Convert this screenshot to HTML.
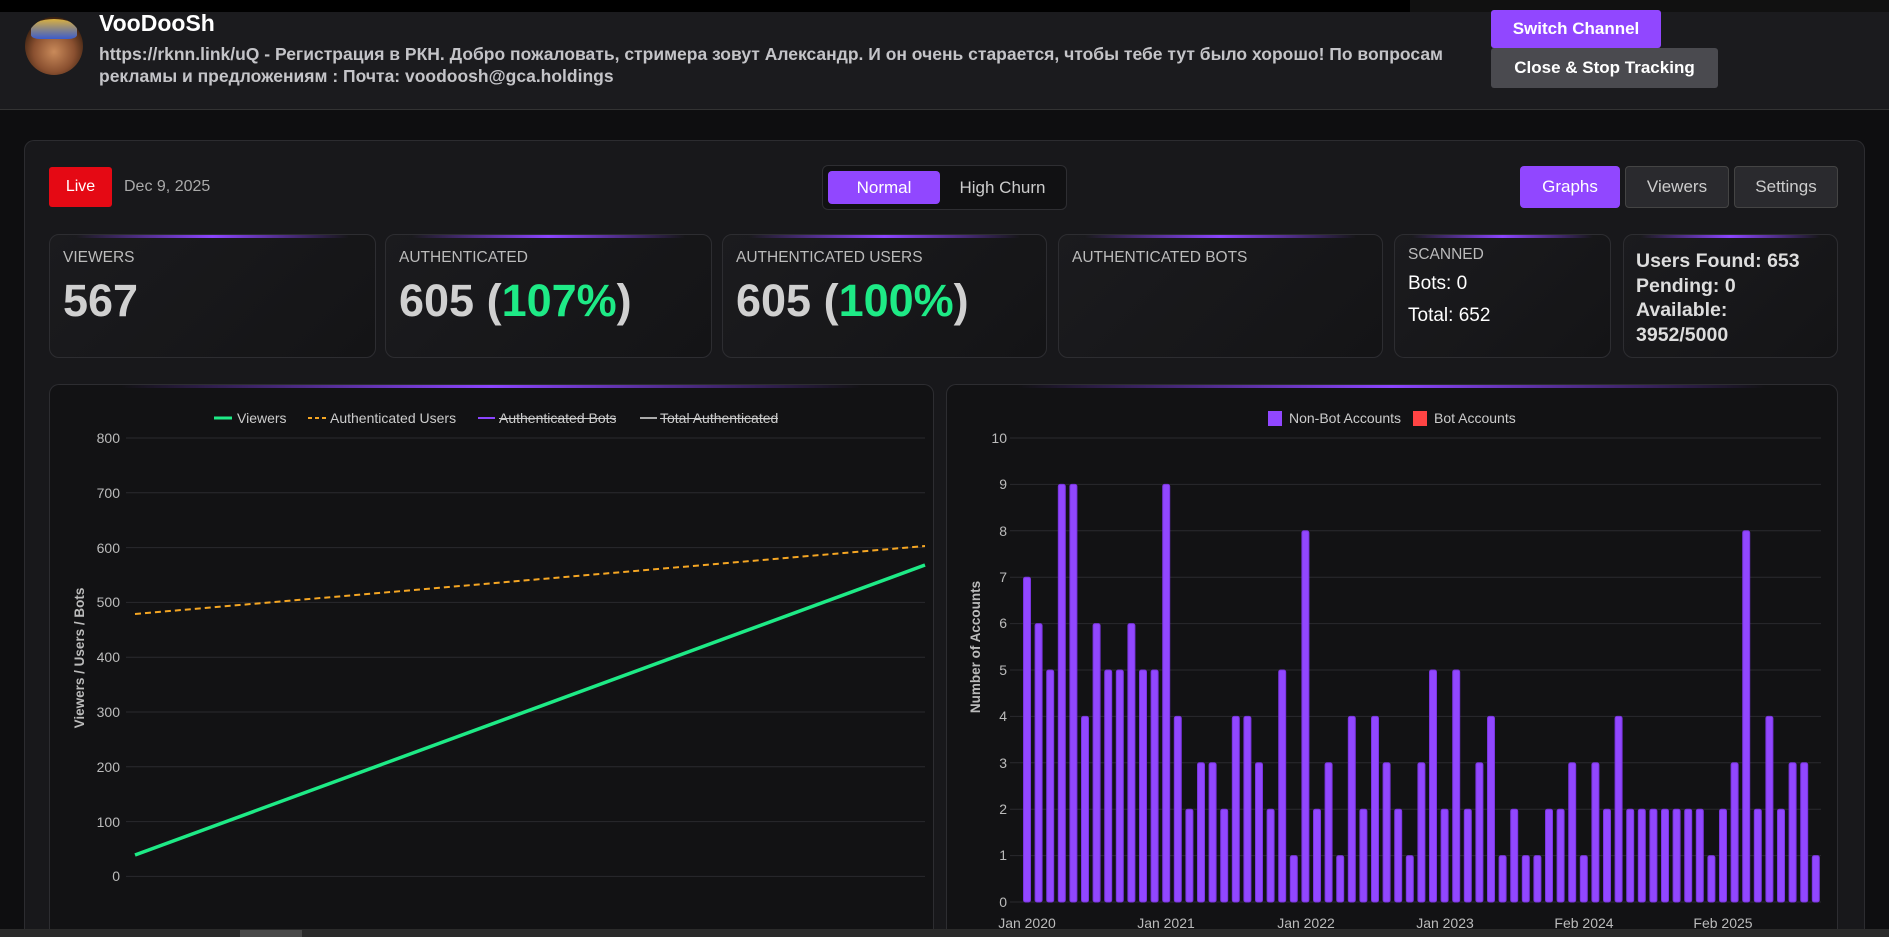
<!DOCTYPE html>
<html><head><meta charset="utf-8"><style>
*{box-sizing:border-box;margin:0;padding:0}
html,body{width:1889px;height:937px;overflow:hidden}
body{background:#0e0e10;font-family:"Liberation Sans",Arial,sans-serif;position:relative;color:#ddd}
.abs{position:absolute}
.topbar{left:0;top:0;width:1889px;height:12px;background:#000}
.header{left:0;top:12px;width:1889px;height:98px;background:#1b1b1e;border-bottom:1px solid #333}
.avatar{left:25px;top:17px;width:58px;height:58px;border-radius:50%;background:radial-gradient(circle at 50% 60%,#c98a5a 0,#8a5030 45%,#3a2010 75%);overflow:hidden}
.avatar:before{content:"";position:absolute;left:6px;top:2px;width:46px;height:20px;border-radius:50% 50% 20% 20%;background:linear-gradient(#d9b040,#3b5ccc)}
.title{left:99px;top:10px;font-size:23px;font-weight:bold;color:#fff}
.desc{left:99px;top:43px;width:1360px;font-size:17.5px;font-weight:bold;color:#c4c4c8;line-height:22px}
.btn{font-weight:bold;color:#fff;font-size:17px;display:flex;align-items:center;justify-content:center;border-radius:3px}
.main{left:24px;top:140px;width:1841px;height:797px;background:#18181b;border:1px solid #2c2c30;border-bottom:none;border-radius:10px 10px 0 0}
.card{background:linear-gradient(135deg,#1b1b1e,#141416);border:1px solid #2d2d31;border-radius:10px;overflow:hidden}
.card:before{content:"";position:absolute;left:8%;right:8%;top:0;height:3px;background:linear-gradient(90deg,transparent,#8b45ff,transparent)}
.lbl{position:absolute;left:13px;top:14px;font-size:15.5px;color:#bbb}
.big{position:absolute;left:13px;top:40px;font-size:45px;font-weight:bold;color:#d0d0d0}
.g{color:#1eea86}
.tab{font-size:17px;color:#ccc;display:flex;align-items:center;justify-content:center;border-radius:4px}
svg text{font-family:"Liberation Sans",Arial,sans-serif}
</style></head><body>
<div class="abs topbar"></div>
<div class="abs" style="left:1410px;top:0;width:479px;height:12px;background:#111"></div>
<div class="abs header"></div>
<div class="abs avatar"></div>
<div class="abs title">VooDooSh</div>
<div class="abs desc">https://rknn.link/uQ - Регистрация в РКН. Добро пожаловать, стримера зовут Александр. И он очень старается, чтобы тебе тут было хорошо! По вопросам рекламы и предложениям : Почта: voodoosh@gca.holdings</div>
<div class="abs btn" style="left:1491px;top:10px;width:170px;height:38px;background:#9147ff">Switch Channel</div>
<div class="abs btn" style="left:1491px;top:48px;width:227px;height:40px;background:#4a4a4f">Close &amp; Stop Tracking</div>

<div class="abs main"></div>
<div class="abs btn" style="left:49px;top:167px;width:63px;height:40px;background:#e50914;font-weight:normal;font-size:16px;border-radius:3px">Live</div>
<div class="abs" style="left:124px;top:178px;font-size:16px;color:#aaa">Dec 9, 2025</div>
<div class="abs" style="left:822px;top:165px;width:245px;height:45px;border:1px solid #2e2e32;border-radius:6px;background:#111113"></div>
<div class="abs tab" style="left:828px;top:171px;width:112px;height:33px;background:#9147ff;color:#fff">Normal</div>
<div class="abs tab" style="left:945px;top:171px;width:115px;height:33px">High Churn</div>
<div class="abs tab" style="left:1520px;top:166px;width:100px;height:42px;background:#9147ff;color:#fff">Graphs</div>
<div class="abs tab" style="left:1625px;top:166px;width:104px;height:42px;background:#2a2a2e;border:1px solid #444">Viewers</div>
<div class="abs tab" style="left:1734px;top:166px;width:104px;height:42px;background:#2a2a2e;border:1px solid #444">Settings</div>

<div class="abs card" style="left:49px;top:234px;width:327px;height:124px"><div class="lbl">VIEWERS</div><div class="big">567</div></div>
<div class="abs card" style="left:385px;top:234px;width:327px;height:124px"><div class="lbl">AUTHENTICATED</div><div class="big">605 (<span class="g">107%</span>)</div></div>
<div class="abs card" style="left:722px;top:234px;width:325px;height:124px"><div class="lbl">AUTHENTICATED USERS</div><div class="big">605 (<span class="g">100%</span>)</div></div>
<div class="abs card" style="left:1058px;top:234px;width:325px;height:124px"><div class="lbl">AUTHENTICATED BOTS</div></div>
<div class="abs card" style="left:1394px;top:234px;width:217px;height:124px"><div class="lbl" style="top:11px">SCANNED</div><div class="abs" style="left:13px;top:38px;font-size:19px;color:#fff">Bots: 0</div><div class="abs" style="left:13px;top:70px;font-size:19px;color:#fff">Total: 652</div></div>
<div class="abs card" style="left:1623px;top:234px;width:215px;height:124px"><div class="abs" style="left:12px;top:14px;font-size:19.5px;font-weight:bold;color:#ddd;line-height:24.6px;white-space:nowrap">Users Found: 653<br>Pending: 0<br>Available:<br>3952/5000</div></div>

<div class="abs card" style="left:49px;top:384px;width:885px;height:553px;background:#121214;border-bottom:none;border-radius:10px 10px 0 0"></div>
<div class="abs card" style="left:946px;top:384px;width:892px;height:553px;background:#121214;border-bottom:none;border-radius:10px 10px 0 0"></div>
<div class="abs" style="left:0;top:929px;width:1889px;height:8px;background:#2b2b2b"></div>
<div class="abs" style="left:240px;top:930px;width:62px;height:7px;background:#4a4a4a"></div>

<svg class="abs" style="left:0;top:0" width="1889" height="937">
<g stroke="#2a2a2e" stroke-width="1">
<line x1="126" x2="925" y1="438" y2="438"/><line x1="126" x2="925" y1="492.8" y2="492.8"/><line x1="126" x2="925" y1="547.6" y2="547.6"/><line x1="126" x2="925" y1="602.4" y2="602.4"/><line x1="126" x2="925" y1="657.2" y2="657.2"/><line x1="126" x2="925" y1="712" y2="712"/><line x1="126" x2="925" y1="766.8" y2="766.8"/><line x1="126" x2="925" y1="821.6" y2="821.6"/><line x1="126" x2="925" y1="876.4" y2="876.4"/>
<line x1="1010" x2="1821" y1="438" y2="438"/><line x1="1010" x2="1821" y1="484.4" y2="484.4"/><line x1="1010" x2="1821" y1="530.8" y2="530.8"/><line x1="1010" x2="1821" y1="577.2" y2="577.2"/><line x1="1010" x2="1821" y1="623.6" y2="623.6"/><line x1="1010" x2="1821" y1="670" y2="670"/><line x1="1010" x2="1821" y1="716.4" y2="716.4"/><line x1="1010" x2="1821" y1="762.8" y2="762.8"/><line x1="1010" x2="1821" y1="809.2" y2="809.2"/><line x1="1010" x2="1821" y1="855.6" y2="855.6"/><line x1="1010" x2="1821" y1="902" y2="902"/>
</g>
<g fill="#bbb" font-size="14" text-anchor="end">
<text x="120" y="443">800</text><text x="120" y="498">700</text><text x="120" y="553">600</text><text x="120" y="607">500</text><text x="120" y="662">400</text><text x="120" y="717">300</text><text x="120" y="772">200</text><text x="120" y="827">100</text><text x="120" y="881">0</text>
<text x="1007" y="443">10</text><text x="1007" y="489">9</text><text x="1007" y="536">8</text><text x="1007" y="582">7</text><text x="1007" y="628">6</text><text x="1007" y="675">5</text><text x="1007" y="721">4</text><text x="1007" y="768">3</text><text x="1007" y="814">2</text><text x="1007" y="860">1</text><text x="1007" y="907">0</text>
</g>
<text transform="translate(84,658) rotate(-90)" fill="#bbb" font-size="13.5" font-weight="bold" text-anchor="middle">Viewers / Users / Bots</text>
<text transform="translate(980,647) rotate(-90)" fill="#bbb" font-size="13.5" font-weight="bold" text-anchor="middle">Number of Accounts</text>
<g font-size="14" fill="#ccc">
<line x1="214" x2="232" y1="418" y2="418" stroke="#1eea86" stroke-width="3"/><text x="237" y="423">Viewers</text>
<line x1="308" x2="326" y1="418" y2="418" stroke="#f5a623" stroke-width="2" stroke-dasharray="4,3"/><text x="330" y="423">Authenticated Users</text>
<line x1="478" x2="495" y1="418" y2="418" stroke="#8b45ff" stroke-width="2"/><text x="499" y="423">Authenticated Bots</text><line x1="499" x2="616" y1="418.5" y2="418.5" stroke="#ccc"/>
<line x1="640" x2="657" y1="418" y2="418" stroke="#aaa" stroke-width="2"/><text x="660" y="423">Total Authenticated</text><line x1="660" x2="778" y1="418.5" y2="418.5" stroke="#ccc"/>
<rect x="1268" y="411" width="14" height="15" fill="#9147ff"/><text x="1289" y="423">Non-Bot Accounts</text>
<rect x="1413" y="411" width="14" height="15" fill="#ff4444"/><text x="1434" y="423">Bot Accounts</text>
</g>
<line x1="135" y1="855" x2="925" y2="565" stroke="#1eea86" stroke-width="3.5"/>
<line x1="135" y1="614" x2="925" y2="546" stroke="#f5a623" stroke-width="2" stroke-dasharray="6,4"/>
<g transform="translate(0,902) scale(1,-1)" fill="#9147ff" stroke="#7a35e0" stroke-width="1">
<rect x="1023.5" width="7" rx="2" height="324.8"/><rect x="1035.1" width="7" rx="2" height="278.4"/><rect x="1046.7" width="7" rx="2" height="232"/><rect x="1058.3" width="7" rx="2" height="417.6"/><rect x="1069.9" width="7" rx="2" height="417.6"/>
<rect x="1081.5" width="7" rx="2" height="185.6"/><rect x="1093.1" width="7" rx="2" height="278.4"/><rect x="1104.7" width="7" rx="2" height="232"/><rect x="1116.3" width="7" rx="2" height="232"/><rect x="1127.9" width="7" rx="2" height="278.4"/>
<rect x="1139.5" width="7" rx="2" height="232"/><rect x="1151.1" width="7" rx="2" height="232"/><rect x="1162.7" width="7" rx="2" height="417.6"/><rect x="1174.3" width="7" rx="2" height="185.6"/><rect x="1185.9" width="7" rx="2" height="92.8"/>
<rect x="1197.5" width="7" rx="2" height="139.2"/><rect x="1209.1" width="7" rx="2" height="139.2"/><rect x="1220.7" width="7" rx="2" height="92.8"/><rect x="1232.3" width="7" rx="2" height="185.6"/><rect x="1243.9" width="7" rx="2" height="185.6"/>
<rect x="1255.5" width="7" rx="2" height="139.2"/><rect x="1267.1" width="7" rx="2" height="92.8"/><rect x="1278.7" width="7" rx="2" height="232"/><rect x="1290.3" width="7" rx="2" height="46.4"/><rect x="1301.9" width="7" rx="2" height="371.2"/>
<rect x="1313.5" width="7" rx="2" height="92.8"/><rect x="1325.1" width="7" rx="2" height="139.2"/><rect x="1336.7" width="7" rx="2" height="46.4"/><rect x="1348.3" width="7" rx="2" height="185.6"/><rect x="1359.9" width="7" rx="2" height="92.8"/>
<rect x="1371.5" width="7" rx="2" height="185.6"/><rect x="1383.1" width="7" rx="2" height="139.2"/><rect x="1394.7" width="7" rx="2" height="92.8"/><rect x="1406.3" width="7" rx="2" height="46.4"/><rect x="1417.9" width="7" rx="2" height="139.2"/>
<rect x="1429.5" width="7" rx="2" height="232"/><rect x="1441.1" width="7" rx="2" height="92.8"/><rect x="1452.7" width="7" rx="2" height="232"/><rect x="1464.3" width="7" rx="2" height="92.8"/><rect x="1475.9" width="7" rx="2" height="139.2"/>
<rect x="1487.5" width="7" rx="2" height="185.6"/><rect x="1499.1" width="7" rx="2" height="46.4"/><rect x="1510.7" width="7" rx="2" height="92.8"/><rect x="1522.3" width="7" rx="2" height="46.4"/><rect x="1533.9" width="7" rx="2" height="46.4"/>
<rect x="1545.5" width="7" rx="2" height="92.8"/><rect x="1557.1" width="7" rx="2" height="92.8"/><rect x="1568.7" width="7" rx="2" height="139.2"/><rect x="1580.3" width="7" rx="2" height="46.4"/><rect x="1591.9" width="7" rx="2" height="139.2"/>
<rect x="1603.5" width="7" rx="2" height="92.8"/><rect x="1615.1" width="7" rx="2" height="185.6"/><rect x="1626.7" width="7" rx="2" height="92.8"/><rect x="1638.3" width="7" rx="2" height="92.8"/><rect x="1649.9" width="7" rx="2" height="92.8"/>
<rect x="1661.5" width="7" rx="2" height="92.8"/><rect x="1673.1" width="7" rx="2" height="92.8"/><rect x="1684.7" width="7" rx="2" height="92.8"/><rect x="1696.3" width="7" rx="2" height="92.8"/><rect x="1707.9" width="7" rx="2" height="46.4"/>
<rect x="1719.5" width="7" rx="2" height="92.8"/><rect x="1731.1" width="7" rx="2" height="139.2"/><rect x="1742.7" width="7" rx="2" height="371.2"/><rect x="1754.3" width="7" rx="2" height="92.8"/><rect x="1765.9" width="7" rx="2" height="185.6"/>
<rect x="1777.5" width="7" rx="2" height="92.8"/><rect x="1789.1" width="7" rx="2" height="139.2"/><rect x="1800.7" width="7" rx="2" height="139.2"/><rect x="1812.3" width="7" rx="2" height="46.4"/>
</g>
<g fill="#bbb" font-size="14" text-anchor="middle">
<text x="1027" y="928">Jan 2020</text><text x="1166" y="928">Jan 2021</text><text x="1306" y="928">Jan 2022</text><text x="1445" y="928">Jan 2023</text><text x="1584" y="928">Feb 2024</text><text x="1723" y="928">Feb 2025</text>
</g>
</svg>
</body></html>
